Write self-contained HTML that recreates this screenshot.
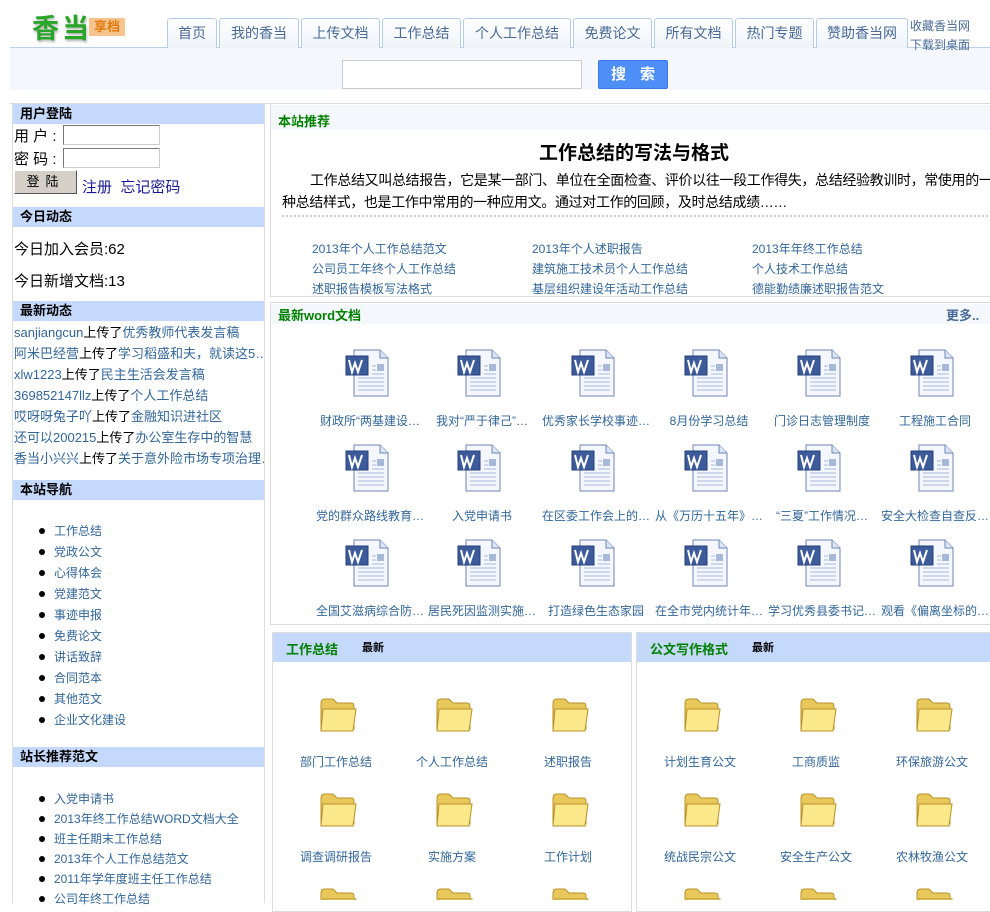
<!DOCTYPE html>
<html><head><meta charset="utf-8">
<style>
*{margin:0;padding:0;box-sizing:border-box}
body{width:990px;height:900px;overflow:hidden;background:#fff;font-family:"Liberation Sans","Noto Sans CJK SC",sans-serif;font-size:12px;color:#000;position:relative}
.a{position:absolute;white-space:nowrap}
.tab{position:absolute;top:18px;height:30px;border:1px solid #b5cce6;border-bottom:none;border-radius:3px 3px 0 0;background:linear-gradient(#fff,#eef3f9);color:#4a6a96;font-size:14px;text-align:center;line-height:28px}
.sh{position:absolute;left:13px;width:251px;height:20px;background:#c5d9fc;font-weight:bold;font-size:13px;padding-left:7px;line-height:20px}
.lk{color:#336699}
.sb li{position:absolute;left:54px;list-style:none;font-size:12px;color:#336699;white-space:nowrap}
.sb li:before{content:"";position:absolute;left:-15px;top:6px;width:6px;height:6px;border-radius:3px;background:#000}
.wl{position:absolute;width:114px;text-align:center;font-size:12px;color:#336699;white-space:nowrap;overflow:hidden}
.fl{position:absolute;width:116px;text-align:center;font-size:12px;color:#336699;white-space:nowrap}
</style></head><body>
<!-- logo -->
<div class="a" style="left:32px;top:7px;font-size:27px;font-weight:bold;color:#2aa52a;letter-spacing:3px;text-shadow:1px 2px 2px #bbb">香当</div>
<div class="a" style="left:89px;top:18px;width:36px;height:18px;background:#f6c48c;color:#e07a10;font-size:13px;font-weight:bold;line-height:18px;text-align:center">享档</div>
<div class="a" style="left:10px;top:48px;width:980px;height:42px;background:#f4f7fb"></div>
<div class="a" style="left:10px;top:47px;width:980px;height:1px;background:#b9d0e8"></div>
<div class="tab" style="left:167px;width:50px">首页</div>
<div class="tab" style="left:219px;width:80px">我的香当</div>
<div class="tab" style="left:301px;width:79px">上传文档</div>
<div class="tab" style="left:382px;width:79px">工作总结</div>
<div class="tab" style="left:463px;width:108px">个人工作总结</div>
<div class="tab" style="left:573px;width:79px">免费论文</div>
<div class="tab" style="left:654px;width:79px">所有文档</div>
<div class="tab" style="left:735px;width:79px">热门专题</div>
<div class="tab" style="left:816px;width:92px">赞助香当网</div>
<div class="a" style="left:910px;top:17px;font-size:12px;color:#4a6a96;line-height:19px">收藏香当网<br>下载到桌面</div>
<div class="a" style="left:342px;top:60px;width:240px;height:29px;background:#fff;border:1px solid #ccc"></div>
<div class="a" style="left:598px;top:60px;width:70px;height:29px;background:#4d8ff7;border:1px solid #3a7ae6;border-radius:2px;color:#fff;font-size:15px;font-weight:bold;text-align:center;line-height:27px;letter-spacing:14px;padding-left:12px">搜索</div>
<div class="a" style="left:10px;top:103px;width:980px;height:1px;background:#ddd"></div>

<!-- left sidebar -->
<div class="a" style="left:12px;top:103px;width:253px;height:800px;border-left:1px solid #ddd;border-right:1px solid #ddd"></div>
<div class="sh" style="top:104px">用户登陆</div>
<div class="a" style="left:14px;top:125px;font-size:15px;line-height:23px">用 户 :<br>密 码 :</div>
<div class="a" style="left:63px;top:125px;width:97px;height:20px;border:1px solid #777;border-right-color:#ccc;border-bottom-color:#ccc;background:#fff"></div>
<div class="a" style="left:63px;top:148px;width:97px;height:20px;border:1px solid #777;border-right-color:#ccc;border-bottom-color:#ccc;background:#fff"></div>
<div class="a" style="left:14px;top:170px;width:63px;height:24px;background:#d4d0c8;border:1px solid #fff;border-right-color:#555;border-bottom-color:#555;text-align:center;line-height:21px;font-size:13px;letter-spacing:6px">登陆</div>
<div class="a" style="left:82px;top:176px;font-size:15px;color:#1a1a99">注册&nbsp;&nbsp;忘记密码</div>
<div class="sh" style="top:207px">今日动态</div>
<div class="a" style="left:14px;top:238px;font-size:15px">今日加入会员:62</div>
<div class="a" style="left:14px;top:270px;font-size:15px">今日新增文档:13</div>
<div class="sh" style="top:301px">最新动态</div>
<div class="a" style="left:14px;top:322px;font-size:13px;line-height:21px;width:250px;overflow:hidden">
<span class="lk">sanjiangcun</span>上传了<span class="lk">优秀教师代表发言稿</span><br>
<span class="lk">阿米巴经营</span>上传了<span class="lk">学习稻盛和夫，就读这5…</span><br>
<span class="lk">xlw1223</span>上传了<span class="lk">民主生活会发言稿</span><br>
<span class="lk">369852147llz</span>上传了<span class="lk">个人工作总结</span><br>
<span class="lk">哎呀呀兔子吖</span>上传了<span class="lk">金融知识进社区</span><br>
<span class="lk">还可以200215</span>上传了<span class="lk">办公室生存中的智慧</span><br>
<span class="lk">香当小兴兴</span>上传了<span class="lk">关于意外险市场专项治理…</span></div>
<div class="sh" style="top:480px">本站导航</div>
<ul class="sb">
<li style="top:522px">工作总结</li><li style="top:543px">党政公文</li><li style="top:564px">心得体会</li><li style="top:585px">党建范文</li><li style="top:606px">事迹申报</li><li style="top:627px">免费论文</li><li style="top:648px">讲话致辞</li><li style="top:669px">合同范本</li><li style="top:690px">其他范文</li><li style="top:711px">企业文化建设</li>
</ul>
<div class="sh" style="top:747px">站长推荐范文</div>
<ul class="sb">
<li style="top:790px">入党申请书</li><li style="top:810px">2013年终工作总结WORD文档大全</li><li style="top:830px">班主任期末工作总结</li><li style="top:850px">2013年个人工作总结范文</li><li style="top:870px">2011年学年度班主任工作总结</li><li style="top:890px">公司年终工作总结</li>
</ul>

<!-- 本站推荐 -->
<div class="a" style="left:270px;top:103px;width:722px;height:194px;border:1px solid #ddd"></div>
<div class="a" style="left:271px;top:105px;width:720px;height:25px;background:#f4f7fb"></div>
<div class="a" style="left:278px;top:111px;font-size:13px;font-weight:bold;color:#008000">本站推荐</div>
<div class="a" style="left:270px;top:138px;width:728px;text-align:center;font-size:19px;font-weight:bold">工作总结的写法与格式</div>
<div class="a" style="left:282px;top:169px;width:720px;white-space:normal;font-size:14px;line-height:22px;text-indent:28px;letter-spacing:-0.35px">工作总结又叫总结报告，它是某一部门、单位在全面检查、评价以往一段工作得失，总结经验教训时，常使用的一种总结样式，也是工作中常用的一种应用文。通过对工作的回顾，及时总结成绩……</div>
<div class="a" style="left:282px;top:215px;width:706px;border-top:2px dotted #ccc"></div>
<div class="a lk" style="left:312px;top:239px;font-size:12px;line-height:20px">2013年个人工作总结范文<br>公司员工年终个人工作总结<br>述职报告模板写法格式</div>
<div class="a lk" style="left:532px;top:239px;font-size:12px;line-height:20px">2013年个人述职报告<br>建筑施工技术员个人工作总结<br>基层组织建设年活动工作总结</div>
<div class="a lk" style="left:752px;top:239px;font-size:12px;line-height:20px">2013年年终工作总结<br>个人技术工作总结<br>德能勤绩廉述职报告范文</div>

<!-- word docs -->
<div class="a" style="left:270px;top:302px;width:722px;height:323px;border:1px solid #ddd"></div>
<div class="a" style="left:271px;top:304px;width:720px;height:20px;background:#f4f7fb"></div>
<div class="a" style="left:278px;top:305px;font-size:13px;font-weight:bold;color:#008000">最新word文档</div>
<div class="a" style="left:946px;top:305px;font-size:13px;font-weight:bold;color:#4a6a96">更多..</div>
<svg class="a" style="left:0;top:0" width="990" height="900">
<defs>
<g id="w">
<path d="M8 0H34L42 8V46H8Z" fill="#f4f7ff" stroke="#6f86b6"/>
<path d="M34 0V8H42" fill="#dde6f7" stroke="#6f86b6"/>
<g stroke="#a8b8d8"><line x1="12" y1="28" x2="38" y2="28"/><line x1="12" y1="32" x2="38" y2="32"/><line x1="12" y1="36" x2="38" y2="36"/><line x1="12" y1="40" x2="38" y2="40"/><line x1="26" y1="16" x2="30" y2="16"/><line x1="26" y1="20" x2="30" y2="20"/><line x1="26" y1="24" x2="38" y2="24"/></g>
<rect x="31" y="14" width="7" height="7" fill="#a8b8d8"/>
<rect x="0" y="6" width="22" height="19" fill="#3d5a9a" stroke="#233d78"/>
<path d="M3 10L6 22L9 13L12 22L16 10" fill="none" stroke="#fff" stroke-width="2"/>
</g>
<g id="f">
<path d="M3 6Q3 2 7 2H15L19 6H33Q36 6 36 9V32H3Z" fill="#e8c85a" stroke="#b8902a"/>
<path d="M5 12H38L35 34H3Z" fill="#fbe88a" stroke="#b8902a"/>
</g>
</defs>
<use href="#w" x="346" y="350"/><use href="#w" x="458" y="350"/><use href="#w" x="572" y="350"/><use href="#w" x="685" y="350"/><use href="#w" x="798" y="350"/><use href="#w" x="911" y="350"/>
<use href="#w" x="346" y="445"/><use href="#w" x="458" y="445"/><use href="#w" x="572" y="445"/><use href="#w" x="685" y="445"/><use href="#w" x="798" y="445"/><use href="#w" x="911" y="445"/>
<use href="#w" x="346" y="540"/><use href="#w" x="458" y="540"/><use href="#w" x="572" y="540"/><use href="#w" x="685" y="540"/><use href="#w" x="798" y="540"/><use href="#w" x="911" y="540"/>
<use href="#f" x="318" y="697"/><use href="#f" x="434" y="697"/><use href="#f" x="550" y="697"/>
<use href="#f" x="318" y="792"/><use href="#f" x="434" y="792"/><use href="#f" x="550" y="792"/>
<use href="#f" x="318" y="887"/><use href="#f" x="434" y="887"/><use href="#f" x="550" y="887"/>
<use href="#f" x="682" y="697"/><use href="#f" x="798" y="697"/><use href="#f" x="914" y="697"/>
<use href="#f" x="682" y="792"/><use href="#f" x="798" y="792"/><use href="#f" x="914" y="792"/>
<use href="#f" x="682" y="887"/><use href="#f" x="798" y="887"/><use href="#f" x="914" y="887"/>
</svg>
<div class="wl" style="left:313px;top:412px">财政所“两基建设…</div>
<div class="wl" style="left:425px;top:412px">我对“严于律己”…</div>
<div class="wl" style="left:539px;top:412px">优秀家长学校事迹…</div>
<div class="wl" style="left:652px;top:412px">8月份学习总结</div>
<div class="wl" style="left:765px;top:412px">门诊日志管理制度</div>
<div class="wl" style="left:878px;top:412px">工程施工合同</div>
<div class="wl" style="left:313px;top:507px">党的群众路线教育…</div>
<div class="wl" style="left:425px;top:507px">入党申请书</div>
<div class="wl" style="left:539px;top:507px">在区委工作会上的…</div>
<div class="wl" style="left:652px;top:507px">从《万历十五年》…</div>
<div class="wl" style="left:765px;top:507px">“三夏”工作情况…</div>
<div class="wl" style="left:878px;top:507px">安全大检查自查反…</div>
<div class="wl" style="left:313px;top:602px">全国艾滋病综合防…</div>
<div class="wl" style="left:425px;top:602px">居民死因监测实施…</div>
<div class="wl" style="left:539px;top:602px">打造绿色生态家园</div>
<div class="wl" style="left:652px;top:602px">在全市党内统计年…</div>
<div class="wl" style="left:765px;top:602px">学习优秀县委书记…</div>
<div class="wl" style="left:878px;top:602px">观看《偏离坐标的…</div>

<!-- bottom boxes -->
<div class="a" style="left:272px;top:632px;width:360px;height:280px;border:1px solid #ddd"></div>
<div class="a" style="left:273px;top:633px;width:358px;height:29px;background:#c5d9fc"></div>
<div class="a" style="left:286px;top:639px;font-size:13px;font-weight:bold;color:#008000">工作总结</div>
<div class="a" style="left:362px;top:639px;font-size:11px;font-weight:bold">最新</div>
<div class="a" style="left:636px;top:632px;width:360px;height:280px;border:1px solid #ddd"></div>
<div class="a" style="left:637px;top:633px;width:358px;height:29px;background:#c5d9fc"></div>
<div class="a" style="left:650px;top:639px;font-size:13px;font-weight:bold;color:#008000">公文写作格式</div>
<div class="a" style="left:752px;top:639px;font-size:11px;font-weight:bold">最新</div>
<div class="fl" style="left:278px;top:753px">部门工作总结</div>
<div class="fl" style="left:394px;top:753px">个人工作总结</div>
<div class="fl" style="left:510px;top:753px">述职报告</div>
<div class="fl" style="left:278px;top:848px">调查调研报告</div>
<div class="fl" style="left:394px;top:848px">实施方案</div>
<div class="fl" style="left:510px;top:848px">工作计划</div>
<div class="fl" style="left:642px;top:753px">计划生育公文</div>
<div class="fl" style="left:758px;top:753px">工商质监</div>
<div class="fl" style="left:874px;top:753px">环保旅游公文</div>
<div class="fl" style="left:642px;top:848px">统战民宗公文</div>
<div class="fl" style="left:758px;top:848px">安全生产公文</div>
<div class="fl" style="left:874px;top:848px">农林牧渔公文</div>
</body></html>
